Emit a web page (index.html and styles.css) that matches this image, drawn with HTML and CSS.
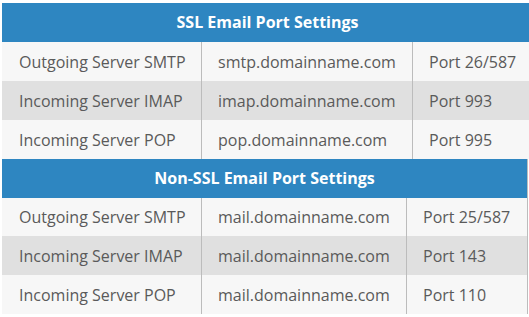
FILE: index.html
```html
<!DOCTYPE html>
<html lang="en">
<head>
<meta charset="utf-8">
<title>Email Port Settings</title>
<link rel="stylesheet" href="styles.css">
</head>
<body>
<div class="page">
  <section class="ports ports-ssl">
    <div class="ports-head">SSL Email Port Settings</div>
    <div class="row odd"><div class="cell c1">Outgoing Server SMTP</div><div class="cell c2">smtp.domainname.com</div><div class="cell c3">Port 26/587</div></div>
    <div class="row even"><div class="cell c1">Incoming Server IMAP</div><div class="cell c2">imap.domainname.com</div><div class="cell c3">Port 993</div></div>
    <div class="row odd"><div class="cell c1">Incoming Server POP</div><div class="cell c2">pop.domainname.com</div><div class="cell c3">Port 995</div></div>
  </section>
  <section class="ports ports-plain">
    <div class="ports-head">Non-SSL Email Port Settings</div>
    <div class="row odd"><div class="cell c1">Outgoing Server SMTP</div><div class="cell c2">mail.domainname.com</div><div class="cell c3">Port 25/587</div></div>
    <div class="row even"><div class="cell c1">Incoming Server IMAP</div><div class="cell c2">mail.domainname.com</div><div class="cell c3">Port 143</div></div>
    <div class="row odd"><div class="cell c1">Incoming Server POP</div><div class="cell c2">mail.domainname.com</div><div class="cell c3">Port 110</div></div>
  </section>
</div>
</body>
</html>
```
FILE: styles.css
```css
html, body {
  margin: 0;
  padding: 0;
  overflow: hidden;
  background: #ffffff;
}
.page {
  padding: 3px 0 0 2px;
  font-family: "Open Sans", "Liberation Sans", sans-serif;
  font-size: 16px;
  color: #5a5a5a;
}
.ports {
  display: flex;
  flex-direction: column;
}
.ports-ssl {
  width: 531px;
}
.ports-plain {
  width: 525px;
  border-right: 1px solid #bcbcbc;
}
.ports-head {
  height: 39px;
  line-height: 39px;
  background: #2e86c1;
  color: #ffffff;
  font-weight: 700;
  text-align: center;
}
.row {
  display: flex;
  height: 39px;
}
.ports-plain .row:nth-child(2) {
  height: 38px;
}
.row.odd { background: #f7f7f7; }
.row.even { background: #e0e0e0; }
.cell {
  box-sizing: border-box;
  display: flex;
  align-items: center;
  padding-left: 16px;
  white-space: nowrap;
}
.c1 {
  width: 200px;
  padding-left: 17px;
  border-right: 1px solid #bcbcbc;
}
.ports-ssl .c2 {
  width: 211px;
  border-right: 1px solid #bcbcbc;
}
.ports-plain .c2 {
  width: 205px;
  border-right: 1px solid #bcbcbc;
}
.c3 {
  flex: 1;
}
```
